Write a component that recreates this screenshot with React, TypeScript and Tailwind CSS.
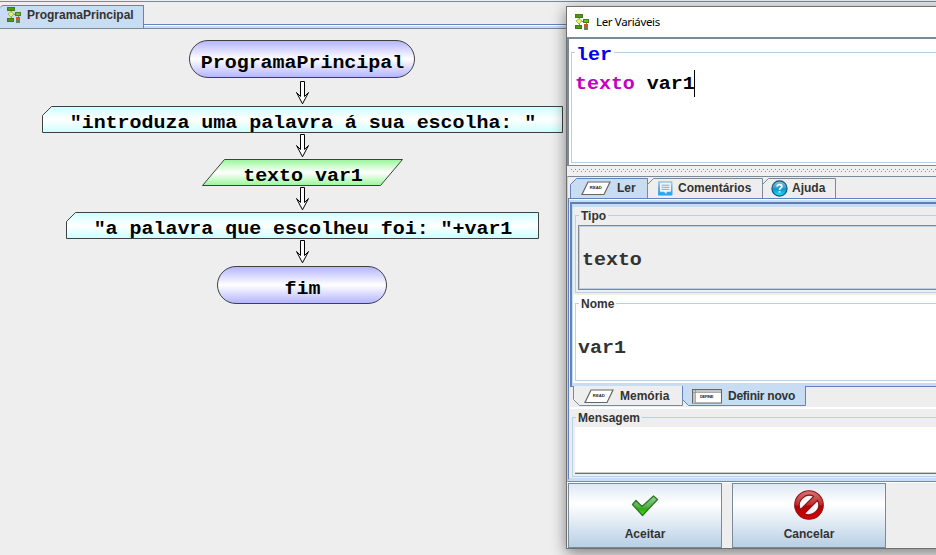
import type { ReactNode } from "react";

const mono = "font-['Liberation_Mono','Courier_New',monospace] text-[20px] font-bold leading-[24px] whitespace-pre tracking-[-0.04px] origin-[50%_72%] scale-y-[0.93]";

function FlowIcon() {
  return (
    <svg width="15" height="16" viewBox="0 0 15 16" shapeRendering="crispEdges">
      <path d="M4 4v9M4 7h6M11 8v5" stroke="#888" strokeWidth="1" fill="none" />
      <rect x="0" y="0" width="8" height="4" fill="#3f7d12" />
      <rect x="1" y="1" width="6" height="2" fill="#4e9a06" />
      <path d="M4 4.500L7 7 4 10 1 7z" fill="#e6f27a" stroke="#97a848" strokeWidth="0.800" shapeRendering="auto" />
      <rect x="8" y="5" width="6" height="4" fill="#487f1c" />
      <rect x="9" y="6" width="4" height="2" fill="#73b82a" />
      <rect x="0" y="11" width="7" height="4" fill="#3f7d12" />
      <rect x="1" y="12" width="5" height="2" fill="#4e9a06" />
      <rect x="9" y="10" width="4" height="3" fill="#d5532c" />
      <rect x="9" y="13" width="4" height="3" fill="#68815a" />
    </svg>
  );
}

function Arrow({ gap }: { gap: string }) {
  return (
    <svg width="15" height="24" viewBox="0 0 15 24" className={`shrink-0 ${gap}`}>
      <path d="M5.500 0.500H9.500V15.500L13.500 11.500 7.500 22.800 1.500 11.500 5.500 15.500Z" fill="#fff" stroke="#000" />
    </svg>
  );
}

function Node({ kind, w, h, pad, children }: { kind: "pill" | "print" | "read"; w: number; h: number; pad: string; children: string }) {
  const palette = { pill: ["#b3b3ff", "#fff"], print: ["#ccffff", "#fff"], read: ["#99f799", "#fff"] }[kind];
  const r = w - 0.5;
  const b = h - 0.5;
  const shape =
    kind === "print"
      ? `M0.500 9.500L9.500 0.500H${r}V${b}H0.500Z`
      : `M22.500 0.500H${r}L${r - 22} ${b}H0.500Z`;
  const id = `g-${kind}`;
  return (
    <div className="relative shrink-0" style={{ width: w, height: h }}>
      <svg width={w} height={h} className="absolute inset-0">
        <defs>
          <linearGradient id={id} x1="0" y1="0" x2="0" y2="1">
            <stop offset="0" stopColor={palette[0]} />
            <stop offset="0.5" stopColor={palette[1]} />
            <stop offset="1" stopColor={palette[0]} />
          </linearGradient>
        </defs>
        {kind === "pill" ? (
          <rect x="0.5" y="0.5" width={w - 1} height={h - 1} rx="18.500" fill={`url(#${id})`} stroke="#404040" />
        ) : (
          <path d={shape} fill={`url(#${id})`} stroke="#404040" />
        )}
      </svg>
      <div className={`relative pl-px ${pad}`}>
        <div className={`text-center text-black ${mono}`}>{children}</div>
      </div>
    </div>
  );
}

function ReadIcon() {
  return (
    <svg width="30" height="15" viewBox="0 0 30 15">
      <path d="M7 1H29L23 13.500H1Z" fill="#fff" stroke="#666" strokeWidth="1.200" />
      <text x="14.800" y="8.300" fontSize="4.200" fontWeight="bold" textAnchor="middle" fontFamily="Liberation Sans" fill="#222">READ</text>
    </svg>
  );
}

function DefineIcon() {
  return (
    <svg width="30" height="15" viewBox="0 0 30 15">
      <rect x="0.500" y="0.500" width="29" height="13.500" fill="#fff" stroke="#666" />
      <path d="M1 1h28v2.500H3.500V14H1z" fill="#c4c4c4" />
      <path d="M1 3.500h28M3.500 1v13" stroke="#888" strokeWidth="0.600" />
      <text x="14.500" y="9.300" fontSize="4" fontWeight="bold" textAnchor="middle" fontFamily="Liberation Sans" fill="#222">DEFINE</text>
    </svg>
  );
}

function CommentIcon() {
  return (
    <svg width="15" height="15" viewBox="0 0 15 15">
      <defs>
        <linearGradient id="cm" x1="0" y1="0" x2="0" y2="1">
          <stop offset="0" stopColor="#a9cfe6" />
          <stop offset="0.5" stopColor="#5bb0ea" />
          <stop offset="1" stopColor="#1ea4f2" />
        </linearGradient>
      </defs>
      <rect width="14.500" height="14.500" rx="1" fill="url(#cm)" />
      <path d="M3 1.800h9q1 0 1 1v7q0 1-1 1H8.500v2.400L6 10.800H3q-1 0-1-1v-7q0-1 1-1z" fill="#eef6fb" />
      <path d="M3.500 4.200h8M3.500 6.300h8M3.500 8.400h8" stroke="#86aec6" strokeWidth="1" />
    </svg>
  );
}

function HelpIcon() {
  return (
    <svg width="17" height="17" viewBox="0 0 17 17">
      <defs>
        <linearGradient id="hp" x1="0" y1="0" x2="0" y2="1">
          <stop offset="0" stopColor="#7fc4e4" />
          <stop offset="0.48" stopColor="#2f9fce" />
          <stop offset="0.52" stopColor="#0796c8" />
          <stop offset="1" stopColor="#22e4fb" />
        </linearGradient>
      </defs>
      <circle cx="8.500" cy="8.500" r="7.600" fill="url(#hp)" stroke="#164e78" strokeWidth="1.100" />
      <path d="M6 6.700Q6.200 4.600 8.500 4.600 10.900 4.600 10.900 6.500 10.900 7.600 9.500 8.300 8.500 8.800 8.500 10" fill="none" stroke="#fff" strokeWidth="1.600" />
      <rect x="7.700" y="11" width="1.700" height="1.700" fill="#fff" />
    </svg>
  );
}

function CheckIcon() {
  return (
    <svg width="28" height="22" viewBox="0 0 28 22">
      <defs>
        <linearGradient id="ck" x1="0" y1="0" x2="0" y2="1">
          <stop offset="0" stopColor="#93d29b" />
          <stop offset="0.58" stopColor="#57ac49" />
          <stop offset="0.64" stopColor="#2eaa0c" />
          <stop offset="1" stopColor="#52d914" />
        </linearGradient>
      </defs>
      <path d="M1.500 9.500L5 5.500 11 11.500 22.500 1 26.500 4.500 11.500 20.500Z" fill="url(#ck)" stroke="#277b1f" strokeWidth="1.300" strokeLinejoin="round" />
    </svg>
  );
}

function ForbidIcon() {
  return (
    <svg width="30" height="30" viewBox="0 0 30 30">
      <defs>
        <linearGradient id="fb" x1="0" y1="0" x2="0" y2="1">
          <stop offset="0" stopColor="#d97676" />
          <stop offset="0.48" stopColor="#bd2e2e" />
          <stop offset="0.54" stopColor="#b30303" />
          <stop offset="1" stopColor="#dc0000" />
        </linearGradient>
      </defs>
      <path
        fillRule="evenodd"
        d="M15 .7a14.300 14.300 0 1 1 0 28.600a14.300 14.300 0 1 1 0-28.600zM19.600 6.300A10 10 0 0 0 6.300 19.600zM23.700 10.400L10.400 23.700A10 10 0 0 0 23.700 10.400z"
        fill="url(#fb)"
        stroke="#8c1414"
        strokeWidth="1.100"
      />
    </svg>
  );
}

function Tab({ w, flip, active, pad, icon, gap, children }: { w: number; flip?: boolean; active?: boolean; pad: string; gap: string; icon: ReactNode; children: string }) {
  const r = w - 0.5;
  const path = flip ? `M0.500 0V13.500L6.500 19.500H${r}V0` : `M0.500 20V6.500L6.500 0.500H${r}V20`;
  return (
    <div className="relative h-5 shrink-0" style={{ width: w }}>
      <svg width={w} height="20" className="absolute inset-0">
        <path d={path} fill={active ? "#c8ddf2" : "#eeeeee"} stroke={active ? "#6382bf" : "#7a8a99"} />
      </svg>
      <div className={`relative flex h-5 items-center whitespace-nowrap ${pad} ${gap}`}>
        {icon}
        <span>{children}</span>
      </div>
    </div>
  );
}

function ActionButton({ icon, pad, children }: { icon: ReactNode; pad: string; children: string }) {
  return (
    <div className={`flex h-[65px] w-[154px] flex-col items-center justify-between border border-[#7a8a99] bg-[linear-gradient(#dde8f3_0%,#ffffff_30%,#ffffff_32%,#b8cfe5_100%)] pb-[6px] ${pad}`}>
      {icon}
      <span className="leading-[14px]">{children}</span>
    </div>
  );
}

function Group({ title, box, label, children }: { title: string; box: string; label: string; children: ReactNode }) {
  return (
    <div className={`flex flex-col border border-r-0 border-[#b8cfe5] ${box}`}>
      <div className={`h-[14px] self-start px-[2px] leading-[14px] ${label}`}>{title}</div>
      {children}
    </div>
  );
}

function Dialog() {
  return (
    <div className="absolute left-[566px] top-[6px] flex h-[543px] w-[400px] flex-col border border-[#707070] bg-[#eeeeee] shadow-[0_4px_14px_rgba(0,0,0,0.48)]">
      <div className="flex h-[30px] shrink-0 items-center gap-[6px] bg-white pl-[8px]">
        <FlowIcon />
        <span className="font-['Noto_Sans',sans-serif] text-[11.500px] font-normal tracking-[-0.350px] text-black">Ler Variáveis</span>
      </div>
      <div className="h-[129px] shrink-0 border-b border-l-2 border-t-2 border-[#7a8a99] bg-white pl-[2px] pt-[13px]">
        <div className="flex h-[111px] flex-col border border-[#b8cfe5]">
          <div className="-mt-[10px] ml-[3px] h-[24px] self-start bg-white pl-px pr-[2px] text-[#0000f0]">
            <div className={mono}>ler</div>
          </div>
          <div className="mt-[3px] flex h-[27px] items-center pl-[3px]">
            <div className={mono}>
              <span className="text-[#c400c4]">texto</span>
              <span className="text-black"> var1</span>
            </div>
            <span className="-ml-px h-[27px] w-px bg-black" />
          </div>
        </div>
      </div>
      <div className="flex h-[10px] shrink-0 items-center bg-[#f0f0f0] pl-[4px]">
        <div className="h-[4px] flex-1 bg-[radial-gradient(circle_at_0.500px_0.500px,#7a8a99_0.600px,transparent_0.700px),radial-gradient(circle_at_2.500px_2.500px,#7a8a99_0.600px,transparent_0.700px)] bg-[size:4px_4px]" />
      </div>
      <div className="flex h-[306px] shrink-0 flex-col border-b border-l border-t border-[#7a8a99] border-l-[#b8cfe5]">
        <div className="flex h-[22px] shrink-0 items-end border-b border-[#6382bf] pl-[2px]">
          <Tab w={78} active pad="pl-[11px]" gap="gap-[6px]" icon={<ReadIcon />}>Ler</Tab>
          <div className="-ml-px">
            <Tab w={116} pad="pl-[11px]" gap="gap-[5px]" icon={<CommentIcon />}>Comentários</Tab>
          </div>
          <div className="-ml-px">
            <Tab w={74} pad="pl-[9px]" gap="gap-[4px]" icon={<HelpIcon />}>Ajuda</Tab>
          </div>
        </div>
        <div className="flex flex-1 flex-col border-b-[3px] border-l border-[#c8ddf2] border-l-[#6382bf]">
          <div className="h-px shrink-0 bg-white" />
          <div className="h-[2px] shrink-0 bg-[#c8ddf2]" />
          <div className="ml-px flex h-[184px] shrink-0 flex-col border-l-2 border-t-2 border-[#6382bf] border-t-[#5d7cb8]">
            <div className="flex h-full flex-col border-b-[3px] border-l border-t-[3px] border-[#c8ddf2]">
              <div className="h-[88px] shrink-0 bg-[#eeeeee] pl-[2px] pt-[8px]">
                <Group title="Tipo" box="h-[78px] pl-[2px]" label="-mt-[7px] ml-[1px] bg-[#eeeeee]">
                  <div className="mt-[2px] flex h-[65px] items-center border border-r-0 border-[#7a8a99] pl-[3px] pt-[5px] text-[#333] shadow-[inset_1px_1px_#b8cfe5,inset_0_-1px_#b8cfe5]">
                    <div className={mono}>texto</div>
                  </div>
                </Group>
              </div>
              <div className="flex-1 bg-white pl-[2px] pt-[8px]">
                <Group title="Nome" box="h-[78px] pl-[2px]" label="-mt-[7px] ml-[1px] bg-white">
                  <div className="mt-[25px] text-[#333]">
                    <div className={mono}>var1</div>
                  </div>
                </Group>
              </div>
            </div>
          </div>
          <div className="ml-px flex h-[20px] shrink-0 border-t border-[#6382bf]">
            <div className="-mt-px flex pl-[3px]">
              <Tab w={110} flip pad="pl-[11px]" gap="gap-[6px]" icon={<ReadIcon />}>Memória</Tab>
              <div className="-ml-px tracking-[-0.250px]">
                <Tab w={124} flip active pad="pl-[10px]" gap="gap-[6px]" icon={<DefineIcon />}>Definir novo</Tab>
              </div>
            </div>
          </div>
          <div className="ml-px mt-px h-[2px] shrink-0 bg-white" />
          <div className="ml-px flex-1 bg-[#eeeeee] pl-[2px] pt-[8px]">
            <Group title="Mensagem" box="h-[60px] pl-[2px]" label="-mt-[7px] ml-[1px] bg-[#eeeeee]">
              <div className="mt-[2px] h-[47px] border-b border-[#707070] bg-white shadow-[inset_0_-1px_#ccc]" />
            </Group>
          </div>
        </div>
      </div>
      <div className="flex shrink-0 gap-[10px] border-t border-white pl-px">
        <ActionButton pad="pt-[11px]" icon={<CheckIcon />}>Aceitar</ActionButton>
        <ActionButton pad="pt-[6px]" icon={<ForbidIcon />}>Cancelar</ActionButton>
      </div>
    </div>
  );
}

export default function App() {
  return (
    <div className="relative h-[555px] w-[936px] overflow-hidden bg-[#eeeeee] font-['Liberation_Sans',Arial,sans-serif] text-[12px] font-bold text-[#333]">
      <div className="flex h-[5px]">
        <div className="h-[2px] w-full border-b border-[#7a8a99]" />
      </div>
      <div className="flex h-[24px] border-b border-[#7a8a99] bg-[linear-gradient(#eeeeee_0_19px,#6382bf_19px_20px,#ffffff_20px_21px,#c8ddf2_21px)]">
        <div className="flex h-[23px] w-[144px] items-center gap-[5px] rounded-tl-[4px] border-r border-t border-[#6382bf] bg-[#c8ddf2] pb-[4px] pl-[7px]">
          <FlowIcon />
          <span>ProgramaPrincipal</span>
        </div>
      </div>
      <div className="flex w-[605px] flex-col items-center pt-[11px]">
        <div className="-ml-px">
          <Node kind="pill" w={226} h={38} pad="pt-[11px]">ProgramaPrincipal</Node>
        </div>
        <Arrow gap="mt-[3px] mb-[1px]" />
        <Node kind="print" w={521} h={27} pad="pt-[5px]">{'"introduza uma palavra á sua escolha: "'}</Node>
        <Arrow gap="mt-[1px] mb-[1px]" />
        <Node kind="read" w={201} h={27} pad="pt-[5px]">texto var1</Node>
        <Arrow gap="mt-[1px] mb-[1px]" />
        <Node kind="print" w={473} h={27} pad="pt-[5px]">{'"a palavra que escolheu foi: "+var1'}</Node>
        <Arrow gap="mt-[1px] mb-[2px]" />
        <div className="-ml-px">
          <Node kind="pill" w={170} h={38} pad="pt-[11px]">fim</Node>
        </div>
      </div>
      <Dialog />
    </div>
  );
}
